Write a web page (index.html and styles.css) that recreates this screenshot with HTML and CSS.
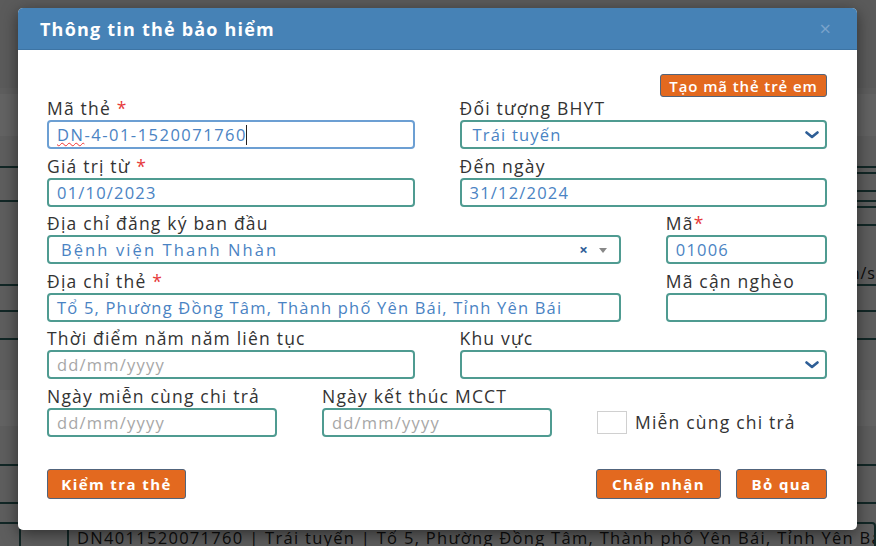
FILE: index.html
```html
<!DOCTYPE html>
<html lang="vi">
<head>
<meta charset="utf-8">
<title>Thông tin thẻ bảo hiểm</title>
<link rel="stylesheet" href="styles.css">
</head>
<body>
<div class="page">
  <div class="pg-row pg-top"></div>
  <div class="pg-row pg-band"></div>
  <div class="pg-row pg-line h32"></div>
  <div class="pg-row pg-line h34"><span class="pg-box"></span></div>
  <div class="pg-row h56"><span class="pg-box"></span></div>
  <div class="pg-row pg-line h28"><span class="pg-text">n/s</span></div>
  <div class="pg-row pg-line h26"></div>
  <div class="pg-row pg-line h28"></div>
  <div class="pg-row h50"></div>
  <div class="pg-row pg-band2"></div>
  <div class="pg-row pg-line h40"></div>
  <div class="pg-row pg-line h38"></div>
  <div class="pg-bottom"><span class="pg-small"></span><span class="pg-field">DN4011520071760 | Trái tuyến | Tổ 5, Phường Đồng Tâm, Thành phố Yên Bái, Tỉnh Yên Bái</span></div>
</div>
<div class="backdrop"></div>

<div class="modal">
  <div class="modal-header">
    <h4 class="modal-title">Thông tin thẻ bảo hiểm</h4>
    <span class="close">&times;</span>
  </div>
  <div class="modal-body">
    <div class="top-actions"><button class="btn btn-sm">Tạo mã thẻ trẻ em</button></div>
    <div class="form-grid">
      <div class="field s6">
        <label>Mã thẻ <span class="req">*</span></label>
        <div class="input focus"><span class="typo">DN</span>-4-01-1520071760<span class="caret"></span></div>
      </div>
      <div class="field s6">
        <label>Đối tượng BHYT</label>
        <div class="input select">Trái tuyến<svg class="chev" viewBox="0 0 14 8"><polyline points="1.5,1.5 7,6 12.5,1.5"/></svg></div>
      </div>
      <div class="field s6">
        <label>Giá trị từ <span class="req">*</span></label>
        <div class="input">01/10/2023</div>
      </div>
      <div class="field s6">
        <label>Đến ngày</label>
        <div class="input">31/12/2024</div>
      </div>
      <div class="field s9">
        <label>Địa chỉ đăng ký ban đầu</label>
        <div class="input select2"><span class="s2-text">Bệnh viện Thanh Nhàn</span><span class="s2-clear">&times;</span><span class="s2-arrow"></span></div>
      </div>
      <div class="field s3">
        <label>Mã<span class="req">*</span></label>
        <div class="input">01006</div>
      </div>
      <div class="field s9">
        <label>Địa chỉ thẻ <span class="req">*</span></label>
        <div class="input">Tổ 5, Phường Đồng Tâm, Thành phố Yên Bái, Tỉnh Yên Bái</div>
      </div>
      <div class="field s3">
        <label>Mã cận nghèo</label>
        <div class="input"></div>
      </div>
      <div class="field s6">
        <label>Thời điểm năm năm liên tục</label>
        <div class="input ph">dd/mm/yyyy</div>
      </div>
      <div class="field s6">
        <label>Khu vực</label>
        <div class="input select"><svg class="chev" viewBox="0 0 14 8"><polyline points="1.5,1.5 7,6 12.5,1.5"/></svg></div>
      </div>
      <div class="field s4">
        <label>Ngày miễn cùng chi trả</label>
        <div class="input ph">dd/mm/yyyy</div>
      </div>
      <div class="field s4">
        <label>Ngày kết thúc MCCT</label>
        <div class="input ph">dd/mm/yyyy</div>
      </div>
      <div class="field s4 check-field">
        <label class="check"><span class="box"></span>Miễn cùng chi trả</label>
      </div>
    </div>
    <div class="footer">
      <button class="btn btn-check">Kiểm tra thẻ</button>
      <div class="footer-right">
        <button class="btn btn-ok">Chấp nhận</button>
        <button class="btn btn-skip">Bỏ qua</button>
      </div>
    </div>
  </div>
</div>
</body>
</html>
```

FILE: styles.css
```css
* { box-sizing: border-box; }
html, body { margin: 0; padding: 0; }
body {
  width: 876px;
  height: 546px;
  overflow: hidden;
  position: relative;
  font-family: "Open Sans", "Noto Sans", sans-serif;
  background: #f3f3f3;
}

/* underlying page */
.page { width: 876px; height: 546px; background: #ececec; }
.pg-row { border-bottom: 1px solid transparent; position: relative; }
.pg-top { height: 88px; background: #e4e4e4; }
.pg-band { height: 48px; background: #f8f8f8; border-top: 6px solid #ebebeb; }
.pg-line { border-bottom: 2px solid #2f6360; }
.h26 { height: 26px; } .h28 { height: 28px; } .h32 { height: 32px; } .h34 { height: 34px; }
.h38 { height: 38px; } .h40 { height: 40px; } .h50 { height: 50px; } .h56 { height: 56px; }
.pg-band2 { height: 36px; background: #f8f8f8; }
.pg-box {
  position: absolute; right: -6px; top: 4px; width: 40px; height: 20px;
  border: 2px solid #2f6360; border-radius: 4px;
}
.pg-text { position: absolute; right: 0; top: 4px; font-size: 16px; color: #222; letter-spacing: 1px; }
.pg-bottom { display: flex; gap: 46px; padding-top: 18px; }
.pg-small {
  flex: 0 0 21px; height: 30px;
  border: 2px solid #2f6360; border-left: 0; border-radius: 0 4px 4px 0;
}
.pg-field {
  flex: 1 1 auto; min-width: 0; overflow: hidden;
  border: 2px solid #2f6360; border-radius: 4px; padding: 2px 8px; height: 30px;
  font-size: 16.5px; line-height: 24px; color: #222; white-space: nowrap; letter-spacing: 1.3px;
}
.backdrop {
  position: absolute; inset: 0; background: rgba(0, 0, 0, 0.6);
}

/* modal */
.modal {
  position: absolute;
  left: 18px; top: 8px;
  width: 839px; height: 522px;
  background: #fff;
  border-radius: 5px;
  overflow: hidden;
  box-shadow: 0 4px 16px rgba(0,0,0,0.5);
}
.modal-header {
  height: 42px;
  background: #4682b6;
  display: flex;
  align-items: center;
  justify-content: space-between;
  padding: 0 22px 0 22px;
  border-bottom: 1px solid #3d74a4;
}
.modal-title {
  margin: 0;
  color: #fff;
  font-size: 18px;
  font-weight: 700;
  letter-spacing: 1.2px;
}
.close {
  color: #7aa3cb;
  font-size: 20px;
  line-height: 1;
  margin-right: 4px;
}
.modal-body {
  padding: 24px 30px 31px 29px;
}
.top-actions { display: flex; justify-content: flex-end; height: 23px; }
.btn {
  font-family: "Open Sans", "Noto Sans", sans-serif;
  background: #e3691f;
  color: #fff;
  border: 1px solid #51647c;
  border-radius: 3px;
  height: 30px;
  padding: 0;
  font-size: 15px;
  font-weight: 700;
  letter-spacing: 1.4px;
  cursor: pointer;
}
.btn-sm {
  height: 23px;
  font-weight: 600;
  font-size: 15px;
  letter-spacing: 0.9px;
  width: 167px;
}
.btn-check { width: 139px; }
.btn-ok { width: 125px; }
.btn-skip { width: 91px; }

.form-grid {
  display: grid;
  grid-template-columns: repeat(12, 1fr);
  column-gap: 45px;
  row-gap: 5.6px;
}
.s3 { grid-column: span 3; }
.s4 { grid-column: span 4; }
.s6 { grid-column: span 6; }
.s9 { grid-column: span 9; }
.field label {
  display: block;
  height: 23px;
  line-height: 23px;
  font-size: 17.5px;
  color: #333;
  letter-spacing: 1.2px;
  white-space: nowrap;
}
.req { color: #e63a3a; }
.input {
  position: relative;
  height: 29px;
  border: 2px solid #4f9b91;
  border-radius: 4px;
  padding: 0 8px 0 8px;
  font-size: 16.5px;
  letter-spacing: 1.2px;
  line-height: 25px;
  color: #4a83c3;
  white-space: nowrap;
  overflow: hidden;
}
.input.focus { border-color: #6c9fd3; letter-spacing: 1.5px; }
.input.ph { color: #a7a7a7; }
.typo {
  text-decoration: underline wavy #e33;
  text-underline-offset: 1px;
  text-decoration-thickness: 1px;
}
.caret { display: inline-block; width: 1px; height: 20px; background: #222; vertical-align: -4px; margin-left: -1px; }
.input.select { padding-left: 11px; }
.chev {
  position: absolute; right: 6px; top: 9px;
  width: 14px; height: 8px;
  fill: none; stroke: #2f5f97; stroke-width: 2.6; stroke-linecap: round; stroke-linejoin: round;
}
.input.select2 { padding-left: 12px; }
.s2-text { letter-spacing: 2.1px; }
.s2-clear {
  position: absolute; right: 31px; top: 0;
  color: #2e5f97; font-weight: 700; font-size: 15px; letter-spacing: 0;
}
.s2-arrow {
  position: absolute; right: 12px; top: 11px;
  border-left: 4.5px solid transparent; border-right: 4.5px solid transparent;
  border-top: 5px solid #888;
}
.check-field { display: flex; align-items: flex-end; }
.check-field .check {
  display: flex; align-items: center; gap: 8px;
  height: 29px; line-height: 29px;
  font-size: 17.5px; letter-spacing: 1.2px; color: #333;
}
.check .box {
  width: 30px; height: 23px;
  border: 1px solid #d0d0d0;
  background: #fff;
}
.footer {
  margin-top: 32px;
  display: flex;
  justify-content: space-between;
}
.footer-right { display: flex; gap: 15px; }
```
